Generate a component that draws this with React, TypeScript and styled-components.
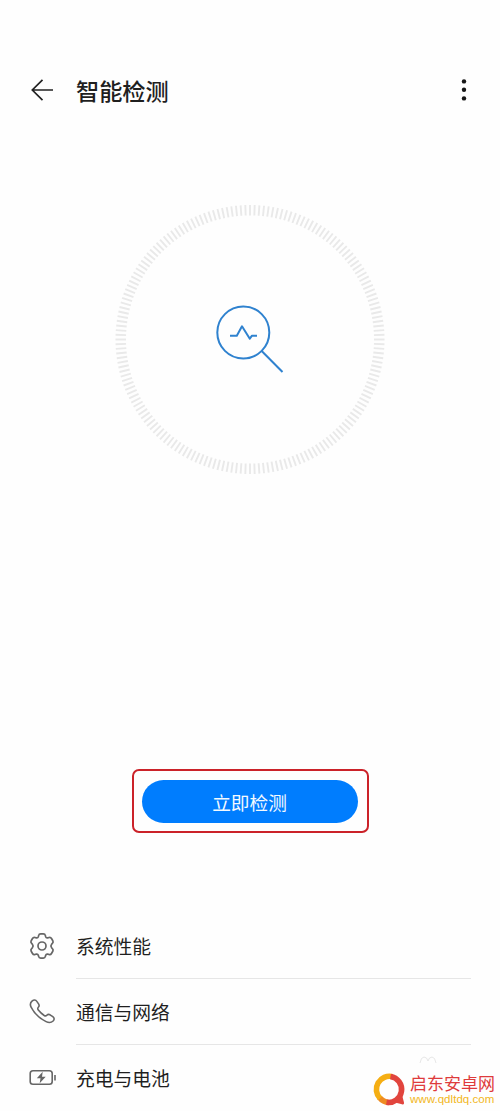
import React from "react";
import styled, { createGlobalStyle } from "styled-components";

const Global = createGlobalStyle`
  * { box-sizing: border-box; }
  body { margin: 0; background: #fefefe; font-family: "Noto Sans CJK SC", "Noto Sans", sans-serif; color: #1f1f1f; }
  svg { display: block; overflow: visible; }
`;

const Screen = styled.main`
  position: relative;
  display: flex;
  flex-direction: column;
  width: 500px;
  height: 1111px;
  overflow: hidden;
  background: #fefefe;
`;

const Header = styled.header`
  display: flex;
  align-items: center;
  height: 60px;
  margin-top: 60px;
  padding: 0 24px 0 30px;
`;

const Title = styled.h1`
  flex: 1;
  margin: 0 0 0 22px;
  font-size: 23.2px;
  line-height: 36px;
  font-weight: 500;
`;

const Dial = styled.section`
  display: flex;
  justify-content: center;
  height: 270px;
  margin-top: 84px;
`;

const Action = styled.section`
  display: flex;
  width: 237px;
  height: 64px;
  margin: 295px 0 0 132px;
  padding: 9px 9px 9px 8px;
  border: 2px solid #cb2229;
  border-radius: 7px;
`;

const StartButton = styled.button`
  width: 100%;
  height: 43px;
  padding: 0 1px 0 0;
  border: 0;
  border-radius: 22px;
  background: #007dfe;
  color: #f4faff;
  font-family: inherit;
  font-size: 18.7px;
  line-height: 42px;
`;

const List = styled.ul`
  margin: 80px 0 0;
  padding: 0 29px;
  list-style: none;
`;

const Item = styled.li`
  display: flex;
  align-items: center;
  height: 66px;
`;

const ItemIcon = styled.span`
  width: 47px;
  flex: none;
`;

const ItemLabel = styled.span<{ $divided: boolean }>`
  flex: 1;
  height: 100%;
  font-size: 18.8px;
  line-height: 66px;
  border-bottom: 1px solid ${(p) => (p.$divided ? "#e6e6e6" : "transparent")};
`;

const Brand = styled.aside`
  position: absolute;
  left: 373px;
  top: 1073px;
  display: flex;
  align-items: flex-start;
`;

const BrandText = styled.div`
  display: flex;
  flex-direction: column;
  margin-left: 4px;
  white-space: nowrap;
`;

const BrandName = styled.span`
  color: #de3b3c;
  font-size: 17px;
  line-height: 20px;
`;

const BrandUrl = styled.span`
  color: #f2b71c;
  font-family: "Liberation Sans", sans-serif;
  font-size: 11.5px;
  line-height: 13px;
  letter-spacing: 0.05px;
`;

const FaintMark = styled.svg`
  position: absolute;
  left: 419px;
  top: 1056px;
`;

const BackIcon = () => (
  <svg width="24" height="24" viewBox="0 0 24 24" fill="none" stroke="#222" strokeWidth="1.7">
    <path d="M23 12H2.5M12.5 1.8L2.3 12L12.5 22.2" />
  </svg>
);

const MoreIcon = () => (
  <svg width="24" height="24" viewBox="0 0 24 24" fill="#161616">
    <circle cx="12" cy="3.4" r="2.2" />
    <circle cx="12" cy="11.8" r="2.2" />
    <circle cx="12" cy="20.4" r="2.2" />
  </svg>
);

const ticks = Array.from({ length: 180 }, (_, i) => i * 2);

const ScanDial = () => (
  <svg width="270" height="270" viewBox="0 0 270 270" fill="none">
    <g stroke="#e9e9e9" strokeWidth="1.9">
      {ticks.map((a) => (
        <path key={a} d="M135 1V11.5" transform={`rotate(${a} 135 135.5)`} />
      ))}
    </g>
    <g stroke="#2f82cf" strokeWidth="2">
      <circle cx="128.3" cy="128.5" r="26" />
      <path d="M146.7 147L167.5 168" />
      <path d="M115 131.7H121.8L127 122.3L134.8 134.7L137 131.7H142" strokeLinejoin="round" />
    </g>
  </svg>
);

const GearIcon = () => (
  <svg width="26" height="26" viewBox="0 0 26 26" fill="none" stroke="#666" strokeWidth="1.7" strokeLinejoin="round">
    <path d="M9.6 2.6Q10 .9 11.7 .9H14.3Q16 .9 16.4 2.6L16.7 3.8Q17.2 5.3 18.7 4.9L20 4.5Q21.6 4 22.5 5.5L23.8 7.7Q24.6 9.2 23.4 10.4L22.6 11.3Q21.2 13 22.6 14.7L23.4 15.6Q24.6 16.8 23.8 18.3L22.5 20.5Q21.6 22 20 21.5L18.7 21.1Q17.2 20.7 16.7 22.2L16.4 23.4Q16 25.1 14.3 25.1H11.7Q10 25.1 9.6 23.4L9.3 22.2Q8.8 20.7 7.3 21.1L6 21.5Q4.4 22 3.5 20.5L2.2 18.3Q1.4 16.8 2.6 15.6L3.4 14.7Q4.8 13 3.4 11.3L2.6 10.4Q1.4 9.2 2.2 7.7L3.5 5.5Q4.4 4 6 4.5L7.3 4.9Q8.8 5.3 9.3 3.8Z" />
    <circle cx="13" cy="13" r="4" />
  </svg>
);

const PhoneIcon = () => (
  <svg width="26" height="26" viewBox="0 0 26 26" fill="none" stroke="#666" strokeWidth="1.6" strokeLinejoin="round">
    <path d="M3 2.2Q5.9 -.3 8 2.6L9.7 5.1Q10.7 6.8 9.3 8.3Q8.2 9.5 9.3 11.1Q11.8 14.3 15.2 16.5Q16.7 17.4 17.8 16.3Q19.3 14.8 21 15.8L23.8 17.7Q26.3 19.7 24.1 22Q21.2 24.7 17.1 22.6Q6.7 17.5 2.1 8.2Q.3 4.7 3 2.2Z" />
  </svg>
);

const BatteryIcon = () => (
  <svg width="27" height="26" viewBox="0 0 27 26" fill="none" stroke="#666" strokeWidth="1.6">
    <rect x="1.2" y="5.8" width="22" height="13.5" rx="2.8" />
    <path d="M26 10V15.4" />
    <path d="M13.7 6.8L7.8 13.3H11.5L10.7 18.3L16.7 11.7H13Z" fill="#666" stroke="none" />
  </svg>
);

const BrandLogo = () => (
  <svg width="33" height="33" viewBox="0 0 33 33" fill="none" strokeWidth="5.6">
    <path d="M6.5 24.5A13.1 13.1 0 0 0 16 29.5" stroke="#ee8b22" />
    <path d="M19.5 3.6A13.1 13.1 0 0 0 7 25.4" stroke="#f5ae13" />
    <path d="M13.5 29.3A13.1 13.1 0 0 0 17.5 3.4" stroke="#e1443d" />
    <path d="M23 27L29 22L31 29.5Q31.4 32 29 31.2L22 29.4Z" fill="#e1443d" />
  </svg>
);

const items = [
  { label: "系统性能", icon: <GearIcon /> },
  { label: "通信与网络", icon: <PhoneIcon /> },
  { label: "充电与电池", icon: <BatteryIcon /> },
];

export default function App() {
  return (
    <>
      <Global />
      <Screen>
        <Header>
          <BackIcon />
          <Title>智能检测</Title>
          <MoreIcon />
        </Header>
        <Dial>
          <ScanDial />
        </Dial>
        <Action>
          <StartButton>立即检测</StartButton>
        </Action>
        <List>
          {items.map((item, i) => (
            <Item key={item.label}>
              <ItemIcon>{item.icon}</ItemIcon>
              <ItemLabel $divided={i < items.length - 1}>{item.label}</ItemLabel>
            </Item>
          ))}
        </List>
        <FaintMark width="18" height="8" viewBox="0 0 18 8" fill="none" stroke="#e7e7e7">
          <path d="M1 7Q2 1 5 1Q8 1 9 5Q10 1 13 1Q16 1 17 7" />
        </FaintMark>
        <Brand>
          <BrandLogo />
          <BrandText>
            <BrandName>启东安卓网</BrandName>
            <BrandUrl>www.qdltdq.com</BrandUrl>
          </BrandText>
        </Brand>
      </Screen>
    </>
  );
}
